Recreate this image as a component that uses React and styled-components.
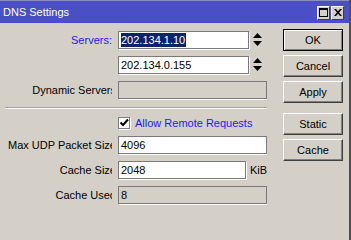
import React from "react";
import styled, { createGlobalStyle } from "styled-components";

const GlobalStyle = createGlobalStyle`
  body {
    margin: 0;
    background: #d4d0c8;
    font-family: "Liberation Sans", Arial, sans-serif;
    font-size: 11px;
  }
`;

function App() {
  return (
    <Window>
      <GlobalStyle />
      <TitleBar>
        <Title>DNS Settings</Title>
        <TitleButtons>
          <TitleButton aria-label="maximize">
            <svg width="9" height="9" viewBox="0 0 9 9">
              <rect x="0.5" y="0.5" width="8" height="8" fill="none" stroke="#000" />
              <rect x="0" y="0" width="9" height="2" fill="#000" />
            </svg>
          </TitleButton>
          <TitleButton aria-label="close">
            <svg width="8" height="7" viewBox="0 0 8 7">
              <path d="M0 0h2l2 2.3L6 0h2L5 3.5 8 7H6L4 4.7 2 7H0l3-3.5z" fill="#000" />
            </svg>
          </TitleButton>
        </TitleButtons>
      </TitleBar>
      <Body>
        <Form>
          <Row>
            <Label $blue>
              <span>Servers:</span>
            </Label>
            <Field $w={131}>
              <Selected>202.134.1.10</Selected>
            </Field>
            <Spinner />
          </Row>
          <Row>
            <Label />
            <Field $w={131}>202.134.0.155</Field>
            <Spinner />
          </Row>
          <Row>
            <Label $over={4}>
              <span>Dynamic Servers</span>
            </Label>
            <Field $w={149} $disabled />
          </Row>
          <Separator />
          <CheckRow>
            <Label />
            <Check>
              <svg width="10" height="10" viewBox="0 0 10 10">
                <path d="M1.5 4.5l2.5 2.5 5-5.5" fill="none" stroke="#000" strokeWidth="2" />
              </svg>
            </Check>
            <CheckText>Allow Remote Requests</CheckText>
          </CheckRow>
          <Row>
            <Label $over={4}>
              <span>Max UDP Packet Size</span>
            </Label>
            <Field $w={149}>4096</Field>
          </Row>
          <Row>
            <Label $over={4}>
              <span>Cache Size</span>
            </Label>
            <Field $w={128}>2048</Field>
            <Unit>KiB</Unit>
          </Row>
          <Row>
            <Label $over={4}>
              <span>Cache Used</span>
            </Label>
            <Field $w={149} $disabled>8</Field>
          </Row>
        </Form>
        <Side>
          <Button $default>OK</Button>
          <Button>Cancel</Button>
          <Button>Apply</Button>
          <Button $gap>Static</Button>
          <Button>Cache</Button>
        </Side>
      </Body>
    </Window>
  );
}

function Spinner() {
  return (
    <SpinIcon width="9" height="14" viewBox="0 0 9 14">
      <path d="M4.5 0L9 5H0z" fill="#000" />
      <path d="M0 8h9l-4.5 5z" fill="#000" />
    </SpinIcon>
  );
}

const Window = styled.div`
  width: 351px;
  height: 240px;
  box-sizing: border-box;
  border-right: 2px solid #505050;
  display: flex;
  flex-direction: column;
  background: #d4d0c8;
  overflow: hidden;
`;

const TitleBar = styled.div`
  height: 23px;
  flex-shrink: 0;
  background: #4a4fc8;
  border-top: 1px solid #8a8ec0;
  box-sizing: border-box;
  display: flex;
  align-items: center;
  justify-content: space-between;
  padding: 0 5px 0 3px;
`;

const Title = styled.div`
  color: #fff;
  font-size: 11px;
  padding-bottom: 1px;
`;

const TitleButtons = styled.div`
  display: flex;
  gap: 1px;
  margin-top: 1px;
`;

const TitleButton = styled.div`
  width: 13px;
  height: 14px;
  box-sizing: border-box;
  background: #d4d0c8;
  border: 1px solid;
  border-color: #fff #404040 #404040 #fff;
  display: flex;
  align-items: center;
  justify-content: center;
`;

const Body = styled.div`
  display: flex;
  padding-top: 8px;
`;

const Form = styled.div`
  width: 267px;
  flex-shrink: 0;
  display: flex;
  flex-direction: column;
  overflow: hidden;
  padding-bottom: 1px;
`;

const Row = styled.div`
  display: flex;
  align-items: center;
  height: 18px;
  margin-bottom: 7px;
`;

const CheckRow = styled(Row)`
  height: 13px;
  margin-bottom: 7px;
`;

const Label = styled.div`
  width: 112px;
  flex-shrink: 0;
  margin-right: 6px;
  overflow: hidden;
  text-align: right;
  white-space: nowrap;
  color: ${(p) => (p.$blue ? "#1a1aff" : "#000")};
  span {
    display: inline-block;
    margin-right: ${(p) => (p.$over ? -p.$over : 0)}px;
  }
`;

const Field = styled.div`
  width: ${(p) => p.$w}px;
  height: 18px;
  box-sizing: border-box;
  flex-shrink: 0;
  border: 1px solid #7a7a7a;
  box-shadow: 1px 1px 0 #fff;
  background: ${(p) => (p.$disabled ? "#d4d0c8" : "#fff")};
  display: flex;
  align-items: center;
  padding: 0 2px;
  white-space: nowrap;
  overflow: hidden;
  color: #000;
`;

const Selected = styled.span`
  background: #0a246a;
  color: #fff;
  line-height: 14px;
  padding: 0 1px 0 0;
`;

const SpinIcon = styled.svg`
  margin-left: 4px;
  flex-shrink: 0;
`;

const Separator = styled.div`
  height: 0;
  margin: 1px 0 7px 5px;
  border-top: 1px solid #a0a0a0;
  border-bottom: 1px solid #fff;
`;

const Check = styled.div`
  width: 12px;
  height: 12px;
  box-sizing: border-box;
  flex-shrink: 0;
  background: #fff;
  border: 1px solid #808080;
  box-shadow: 1px 1px 0 #fff;
  display: flex;
  align-items: center;
  justify-content: center;
`;

const CheckText = styled.div`
  margin-left: 5px;
  color: #1a1aff;
  white-space: nowrap;
`;

const Unit = styled.div`
  margin-left: 4px;
  white-space: nowrap;
`;

const Side = styled.div`
  margin-left: 16px;
  display: flex;
  flex-direction: column;
  gap: 4px;
  margin-top: -2px;
`;

const Button = styled.div`
  width: 60px;
  height: 22px;
  box-sizing: border-box;
  margin-top: ${(p) => (p.$gap ? "6px" : "0")};
  background: #d4d0c8;
  border: 1px solid;
  border-color: ${(p) => (p.$default ? "#000" : "#fff #404040 #404040 #fff")};
  box-shadow: ${(p) =>
    p.$default
      ? "inset 1px 1px 0 #fff, inset -1px -1px 0 #808080"
      : "inset -1px -1px 0 #808080"};
  display: flex;
  align-items: center;
  justify-content: center;
  color: #000;
`;

export default App;
